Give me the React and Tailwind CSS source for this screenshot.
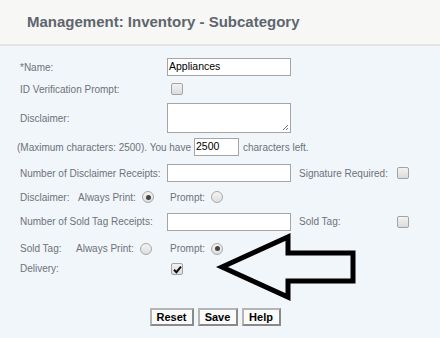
import React from "react";

const font = { fontFamily: '"Liberation Sans", Arial, sans-serif' };

function Checkbox({ checked }) {
  return (
    <span className="relative shrink-0 inline-block w-[12px] h-[12px] rounded-[2px] border border-[#a3a3a3] bg-gradient-to-b from-[#f2f2f2] to-[#dcdcdc]">
      {checked && (
        <svg className="absolute left-[1px] top-[1px]" width="9" height="9" viewBox="0 0 9 9">
          <path d="M1 4.8 L3.4 7.2 L8 1.6" stroke="#111" strokeWidth="2" fill="none" />
        </svg>
      )}
    </span>
  );
}

function Radio({ checked }) {
  return (
    <span className="shrink-0 inline-flex items-center justify-center w-[12px] h-[12px] rounded-full border border-[#a8a8a8] bg-gradient-to-b from-[#f4f4f4] to-[#dedede]">
      {checked && <span className="block w-[5px] h-[5px] rounded-full bg-[#444]" />}
    </span>
  );
}

function TextInput({ value = "" }) {
  return (
    <div className="shrink-0 w-[124px] h-[18px] border border-[#a5a5a5] bg-white flex items-center px-[1px] text-[10.5px] text-black">
      {value}
    </div>
  );
}

const L = "shrink-0 whitespace-nowrap";

export default function App() {
  return (
    <div className="relative w-[440px] h-[338px] overflow-hidden bg-[#f1f6fb]" style={font}>
      <div className="h-[46px] bg-[#f7f7f5] border-b-2 border-[#e4e4e2] flex items-center pl-[27px]">
        <span className="text-[15px] font-bold text-[#5e656d]">Management: Inventory - Subcategory</span>
      </div>
      <div className="pl-[20px] pt-[10px] text-[10px] text-[#6d7278]">
        <div className="flex items-center h-[22px]">
          <span className={`${L} w-[147px]`}>*Name:</span>
          <TextInput value="Appliances" />
        </div>
        <div className="flex items-center h-[22px]">
          <span className={`${L} w-[151px]`}>ID Verification Prompt:</span>
          <Checkbox />
        </div>
        <div className="flex items-center h-[36px]">
          <span className={`${L} w-[147px]`}>Disclaimer:</span>
          <div className="relative shrink-0 w-[124px] h-[30px] border border-[#a5a5a5] bg-white">
            <svg className="absolute right-[1px] bottom-[1px]" width="7" height="7" viewBox="0 0 7 7">
              <path d="M6 1 L1 6 M6 4 L4 6" stroke="#777" strokeWidth="1" />
            </svg>
          </div>
        </div>
        <div className="flex items-center h-[22px] -ml-[3px]">
          <span className={L}>(Maximum characters: 2500). You have</span>
          <div className="shrink-0 ml-[3px] w-[45px] h-[18px] border border-[#a5a5a5] bg-white flex items-center px-[1px] text-[10.5px] text-black">2500</div>
          <span className={`${L} ml-[4px]`}>characters left.</span>
        </div>
        <div className="flex items-center h-[30px]">
          <span className={`${L} w-[147px]`}>Number of Disclaimer Receipts:</span>
          <TextInput />
          <span className={`${L} ml-[8px] w-[98px]`}>Signature Required:</span>
          <Checkbox />
        </div>
        <div className="flex items-center h-[18px]">
          <span className={`${L} w-[58px]`}>Disclaimer:</span>
          <span className={`${L} w-[64px]`}>Always Print:</span>
          <Radio checked />
          <span className={`${L} ml-[16px] w-[41px]`}>Prompt:</span>
          <Radio />
        </div>
        <div className="flex items-center h-[31px]">
          <span className={`${L} w-[147px]`}>Number of Sold Tag Receipts:</span>
          <TextInput />
          <span className={`${L} ml-[8px] w-[98px]`}>Sold Tag:</span>
          <Checkbox />
        </div>
        <div className="flex items-center h-[23px]">
          <span className={`${L} w-[56px]`}>Sold Tag:</span>
          <span className={`${L} w-[64px]`}>Always Print:</span>
          <Radio />
          <span className={`${L} ml-[18px] w-[41px]`}>Prompt:</span>
          <Radio checked />
        </div>
        <div className="flex items-center h-[17px]">
          <span className={`${L} w-[151px]`}>Delivery:</span>
          <Checkbox checked />
        </div>
      </div>
      <div className="flex justify-center gap-[4px] mt-[31px] -ml-[10px]">
        {["Reset", "Save", "Help"].map((b, i) => (
          <button
            key={b}
            className={`${i === 0 ? "w-[44px]" : i === 1 ? "w-[40px]" : "w-[39px]"} h-[18px] border-2 border-t-[#b5b5b5] border-l-[#b5b5b5] border-r-[#8a8a8a] border-b-[#8a8a8a] bg-[#fafafa] text-[11px] font-bold text-black leading-none`}
          >
            {b}
          </button>
        ))}
      </div>
      <svg className="absolute left-0 top-0 pointer-events-none" width="440" height="338">
        <polygon
          points="222,267 288,237 288,253 353,253 353,281 288,281 288,297"
          fill="none"
          stroke="#000"
          strokeWidth="5"
          strokeLinejoin="miter"
        />
      </svg>
    </div>
  );
}
